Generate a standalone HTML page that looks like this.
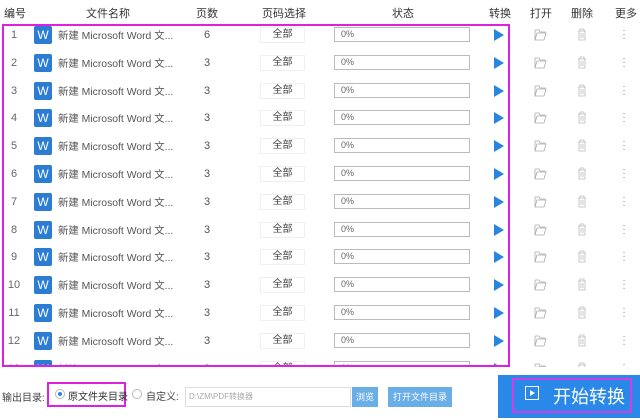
<!DOCTYPE html>
<html><head><meta charset="utf-8"><style>
*{margin:0;padding:0;box-sizing:border-box}
body{width:640px;height:420px;overflow:hidden;background:#fff;font-family:"Liberation Sans","Noto Sans CJK SC",sans-serif;position:relative;color:#555;font-size:11px}
.h{position:absolute;top:5px;font-size:11px;color:#333}
.rows{position:absolute;left:0;top:24px;width:640px;height:343px;overflow:hidden}
.r{position:absolute;left:0;width:640px;height:28px}
.r span,.r div{position:absolute}
.n{width:28px;text-align:center;top:5px;color:#666}
.w{left:34px;top:2px;width:18px;height:18px;background:#2b7cd3;border-radius:2px;color:#fff;font-size:12px;text-align:center;line-height:18px}
.t{left:58px;top:3px;color:#555;font-size:10.4px}
.p{left:198px;width:18px;text-align:center;top:5px}
.b{left:260px;top:3px;width:45px;height:16px;border:1px solid #f0f0f0;background:#fff;text-align:center;line-height:14px;font-size:10px;color:#444}
.s{left:334px;top:3px;width:136px;height:15px;border:1px solid #bbb;font-size:9px;line-height:13px;padding-left:6px;color:#666}
.pl{left:494px;top:5px;width:0;height:0;border-top:6px solid transparent;border-bottom:6px solid transparent;border-left:10px solid #2a85e0}
.m{left:622px;top:5px;color:#888;font-size:10px;line-height:4px;width:4px;text-align:center}
</style></head><body>
<div class="h" style="left:4px">编号</div>
<div class="h" style="left:86px">文件名称</div>
<div class="h" style="left:196px">页数</div>
<div class="h" style="left:262px">页码选择</div>
<div class="h" style="left:392px">状态</div>
<div class="h" style="left:489px">转换</div>
<div class="h" style="left:530px">打开</div>
<div class="h" style="left:571px">删除</div>
<div class="h" style="left:615px">更多</div>
<div class="rows">
<div class="r" style="top:0"><span class="n">1</span><div class="w">W</div><span class="t">新建 Microsoft Word 文...</span><span class="p">6</span><div class="b">全部</div><div class="s">0%</div><div class="pl"></div><svg style="position:absolute;left:534px;top:5px" width="13" height="12"><path d="M1 1h4l1 2h5v1M1 1v10h9l2-7H3L1 11" fill="none" stroke="#aaa" stroke-width="0.8"/></svg><svg style="position:absolute;left:577px;top:4px" width="10" height="13"><path d="M1 3h8M3 3V1h4v2M2 3v9h6V3M4 5v5M6 5v5" fill="none" stroke="#bbb" stroke-width="0.8"/></svg><div class="m">·<br>·<br>·</div></div>
</div>
<div style="position:absolute;left:2px;top:24px;width:508px;height:343px;border:2px solid #e020e0;pointer-events:none"></div>
<div style="position:absolute;left:2px;top:389px;font-size:10px;color:#444">输出目录:</div>
<div style="position:absolute;left:47px;top:382px;width:79px;height:25px;border:2px solid #e020e0"></div>
<div style="position:absolute;left:55px;top:389px;width:10px;height:10px;border:1px solid #bbb;border-radius:50%"><div style="position:absolute;left:2px;top:2px;width:4px;height:4px;background:#2a85e0;border-radius:50%"></div></div>
<div style="position:absolute;left:68px;top:388px;font-size:10px;color:#333">原文件夹目录</div>
<div style="position:absolute;left:132px;top:389px;width:10px;height:10px;border:1px solid #bbb;border-radius:50%"></div>
<div style="position:absolute;left:146px;top:388px;font-size:10px;color:#444">自定义:</div>
<div style="position:absolute;left:185px;top:387px;width:166px;height:20px;border:1px solid #ddd;font-size:8px;color:#aaa;line-height:18px;padding-left:3px">D:\ZM\PDF转换器</div>
<div style="position:absolute;left:352px;top:387px;width:26px;height:20px;background:#6aaee8;color:#fff;font-size:9px;text-align:center;line-height:20px">浏览</div>
<div style="position:absolute;left:388px;top:387px;width:64px;height:20px;background:#6aaee8;color:#fff;font-size:9px;text-align:center;line-height:20px">打开文件目录</div>
<div style="position:absolute;left:498px;top:375px;width:142px;height:43px;background:#2a88e8"></div>
<div style="position:absolute;left:512px;top:378px;width:120px;height:35px;border:2px solid #d040e0"></div>
<div style="position:absolute;left:525px;top:386px;width:14px;height:14px;border:1.5px solid #fff"><div style="position:absolute;left:4px;top:2.5px;border-top:3.5px solid transparent;border-bottom:3.5px solid transparent;border-left:5px solid #fff"></div></div>
<div style="position:absolute;left:553px;top:383px;font-size:18px;color:#fff">开始转换</div>
<script>
var rs=document.querySelector('.rows'),f=rs.firstElementChild,pg=[6,3,3,3,3,3,3,3,3,3,3,3,3];
for(var i=1;i<13;i++){var c=f.cloneNode(true);c.style.top=(i*27.8)+'px';c.querySelector('.n').textContent=i+1;c.querySelector('.p').textContent=pg[i];rs.appendChild(c);}
</script>
</body></html>
